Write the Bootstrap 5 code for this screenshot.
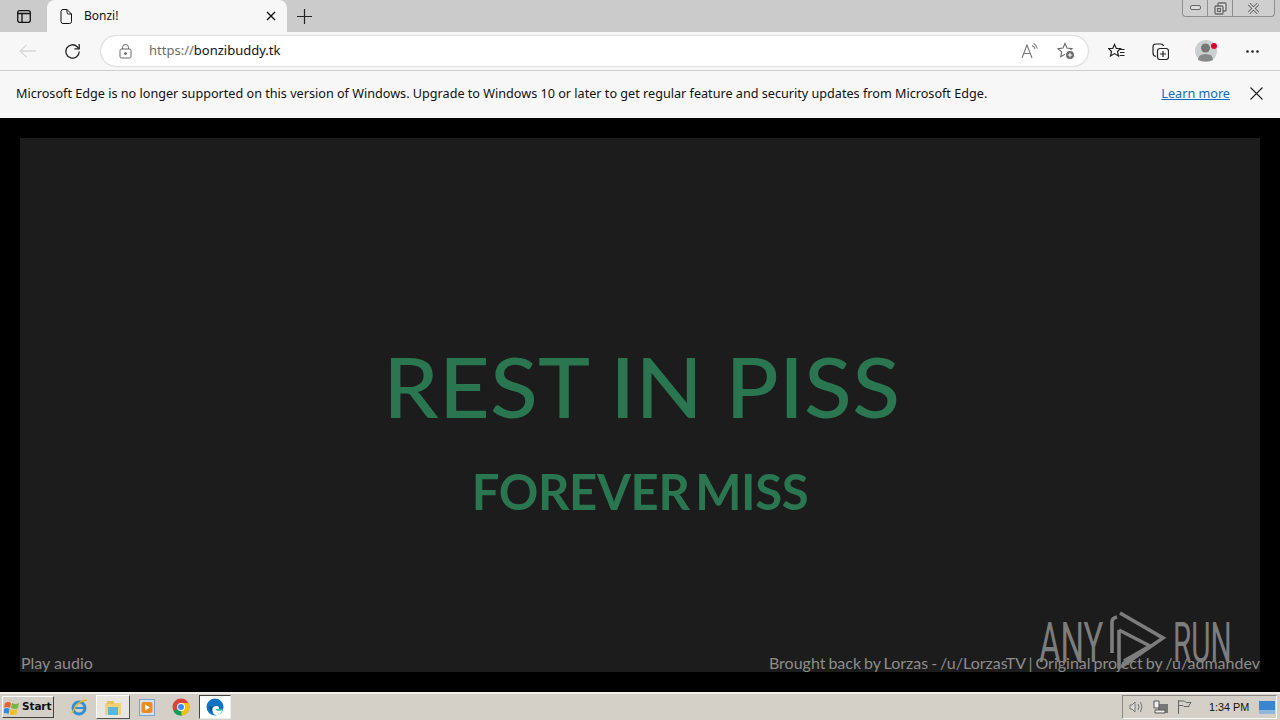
<!DOCTYPE html>
<html lang="en">
<head>
<meta charset="utf-8">
<title>Bonzi!</title>
<link href="https://cdn.jsdelivr.net/npm/bootstrap@5.3.0/dist/css/bootstrap.min.css" rel="stylesheet">
<style>
html,body{margin:0;height:720px;overflow:hidden;background:#000}
body{width:1280px;font-family:"Noto Sans","Open Sans",sans-serif;color:#111;position:relative}
svg{display:block;flex:none}
.tabstrip{height:32px;background:#cbcbcb;padding-left:8px}
.side-btn{width:32px;height:32px}
.browser-tab{width:240px;height:32px;margin-left:7px;background:#f7f7f7;border-radius:8px 8px 0 0;padding:0 11px 0 13px;font-size:12px}
.tab-name{margin-left:12px;margin-right:auto}
.new-tab{width:35px;height:32px}
.win-ctl{height:17px;margin-left:auto;margin-right:5px;border:1px solid #8f8f8f;border-top:0;border-radius:0 0 4px 4px;background:#cfcfcf}
.win-ctl>div{height:100%;border-right:1px solid #8f8f8f;width:25px}
.win-ctl>div:last-child{border-right:0;width:41px}
.toolbar{height:39px;background:#f7f7f7;border-bottom:1px solid #cfcfcf;padding-left:10px}
.tool{width:36px;height:32px}
.tool-prof{margin-left:11px}
.tool-more{margin-left:9px}
.addr{width:987px;height:30px;margin-left:11px;margin-right:10px;background:#fff;border-radius:15px;box-shadow:0 0 2px rgba(0,0,0,.35);padding-left:18px;padding-right:13px;font-size:13px}
.scheme{color:#6b6b6b;margin-left:17px}
.infobar{height:47px;background:#f7f7f7;padding:0 17px 2px 16px;font-size:12.64px}
.infobar a{color:#0f6cbd;margin-left:auto;margin-right:20px}
.page-area{height:574px;background:#000;padding:20px}
.panel{height:534px;background:#1c1c1c;font-family:Lato,sans-serif;position:relative}
.rip{color:#2a7650;font-size:83px;line-height:96px;font-weight:500;margin:0;padding-top:200px;text-align:center;padding-left:4px}
.rip-wide{display:inline-block;transform:scaleX(1.06);letter-spacing:.2px}
.miss{color:#2a7650;font-size:49px;line-height:58px;font-weight:700;margin:0;padding-top:28px;letter-spacing:-.35px;word-spacing:-6px;text-align:center}
.foot-line{position:absolute;left:1px;right:0;bottom:0;color:#8d8d8d;font-size:16px;line-height:19px}
.foot-line a{color:#8d8d8d;text-decoration:none}
.credit{word-spacing:-1.15px}
.mark-logo{position:absolute;left:1039px;top:609px;width:194px;height:62px}
.any,.runw{position:absolute;top:2px;font-family:"Roboto",sans-serif;font-weight:400;font-size:55px;line-height:64px;transform-origin:left top;color:#7d7d7d}
.any{left:0;transform:scaleX(.6)}
.runw{left:134px;transform:scaleX(.54)}
.taskbar{height:28px;background:#d4d0c8;border-top:2px solid #f1efe9;font-family:"Liberation Sans",sans-serif}
.start-btn{width:52px;height:22px;margin:2px 0 0 2px;background:#d4d0c8;border:1px solid;border-color:#fff #404040 #404040 #fff;font-weight:700;font-size:10.5px;font-family:"DejaVu Sans",sans-serif;gap:2px;padding-left:1px;letter-spacing:-.1px}
.t-icon{width:34px;height:24px;margin-top:1px}
.t-first{margin-left:8px}
.t-pressed{background:#e9e6df;border:1px solid;border-color:#fff #555 #555 #fff}
.t-active{background:#fff;border:1px solid;border-color:#444 #eee #eee #444;width:32px;margin-left:1px}
.tray{margin-left:auto;width:155px;height:24px;margin-top:1px;margin-right:3px;border:1px solid;border-color:#8a8a8a #f8f8f8 #f8f8f8 #8a8a8a;font-size:10.8px;padding-left:6px;padding-right:1px;white-space:nowrap}
.clock{margin-left:9px;margin-right:auto}
</style>
</head>
<body>
<div class="tabstrip d-flex align-items-start">
  <div class="side-btn d-flex align-items-center justify-content-center"><svg width="14" height="13" viewBox="0 0 14 13" fill="none" stroke="#111" stroke-width="1.3"><rect x=".7" y=".7" width="12.6" height="11.6" rx="2"/><path d="M.7 3.5h12.6M5 3.5v8.8" /></svg></div>
  <div class="browser-tab d-flex align-items-center">
    <svg width="12" height="15" viewBox="0 0 12 15" fill="none" stroke="#111"><path d="M1 2.500q0-2 2-2h4l4.500 4.500v7.500q0 2-2 2h-6.500q-2 0-2-2zM7 .5v3q0 1.500 1.500 1.500h3"/></svg>
    <span class="tab-name">Bonzi!</span>
    <svg width="10" height="10" viewBox="0 0 10 10" stroke="#111" stroke-width="1.400"><path d="M1 1l8 8M9 1l-8 8"/></svg>
  </div>
  <div class="new-tab d-flex align-items-center justify-content-center"><svg width="15" height="15" viewBox="0 0 15 15" stroke="#222" stroke-width="1.200"><path d="M7.500 0v15M0 7.500h15"/></svg></div>
  <div class="win-ctl d-flex">
    <div class="d-flex align-items-center justify-content-center"><svg width="11" height="6" viewBox="0 0 11 6" fill="#ddd" stroke="#666"><rect x=".5" y=".5" width="10" height="4" rx="1.500"/></svg></div>
    <div class="d-flex align-items-center justify-content-center"><svg width="13" height="13" viewBox="0 0 13 13" fill="#ddd" stroke="#666" stroke-width="1.300"><rect x="4" y="1" width="8" height="8" rx="1"/><rect x="1" y="4" width="8" height="8" rx="1"/><rect x="3.500" y="6.500" width="3" height="3" fill="none"/></svg></div>
    <div class="d-flex align-items-center justify-content-center"><svg width="13" height="11" viewBox="0 0 13 11" stroke="#666" stroke-width="3.200"><path d="M2 1l9 9M11 1l-9 9"/><path d="M2 1l9 9M11 1l-9 9" stroke="#ddd" stroke-width="1.400"/></svg></div>
  </div>
</div>
<div class="toolbar d-flex align-items-center">
  <div class="tool d-flex align-items-center justify-content-center"><svg width="18" height="14" viewBox="0 0 18 14" fill="none" stroke="#d8d8d8" stroke-width="1.300"><path d="M1 7h16M7.500 1l-6.500 6 6.500 6"/></svg></div>
  <div class="tool ms-2 d-flex align-items-center justify-content-center"><svg width="17" height="17" viewBox="0 0 17 17" fill="none" stroke="#222" stroke-width="1.300"><path d="M15.200 8.500a6.700 6.700 0 1 1-2-4.800l2 2"/><path d="M15.200 1v4.800h-4.800" /></svg></div>
  <div class="addr d-flex align-items-center">
    <svg width="13" height="15" viewBox="0 0 13 15" fill="none" stroke="#666"><rect x="1" y="5" width="11" height="9" rx="1.500"/><path d="M3.500 5V3.500a3 3 0 0 1 6 0V5"/><circle cx="6.500" cy="9.500" r="1" fill="#666"/></svg>
    <span class="scheme">https://</span><span>bonzibuddy.tk</span>
    <svg class="ms-auto" width="17" height="16" viewBox="0 0 17 16" fill="none" stroke="#777" stroke-width="1.100"><path d="M1 15L6 2l5 13M2.800 10.500h6.500"/><path d="M11 2.500q2.500 1 3 3.500M12.500.5q3 1.500 3.800 5"/></svg>
    <svg style="margin-left:19px" width="18" height="18" viewBox="0 0 18 18" fill="none" stroke="#666" stroke-width="1.100"><path d="M8 1.500l2 4.600 5 .5-3.700 3.300 1 4.800L8 12.300 3.700 14.700l1-4.800L1 6.600l5-.5z"/><circle cx="13" cy="13" r="4.500" fill="#666" stroke="#f7f7f7"/><path d="M13 10.800v4.400M10.800 13h4.400" stroke="#fff"/></svg>
  </div>
  <div class="tool d-flex align-items-center justify-content-center"><svg width="17" height="16" viewBox="0 0 17 16" fill="none" stroke="#222" stroke-width="1.200"><path d="M6.500 1.500l1.800 4h4.200l-3 3 1 4.500-4-2.400-4 2.400 1-4.500-3-3h4.200z"/><path d="M11.500 6.500h5M12 9.500h4.500M11.500 12.500h5"/></svg></div>
  <div class="tool ms-2 d-flex align-items-center justify-content-center"><svg width="17" height="17" viewBox="0 0 17 17" fill="none" stroke="#222" stroke-width="1.200"><path d="M4 13.500q-3-.5-3-3.500V4q0-3 3-3h5q2 0 2.500 2"/><rect x="5.500" y="5.500" width="11" height="11" rx="2.500"/><path d="M11 8v6M8 11h6"/></svg></div>
  <div class="tool tool-prof d-flex align-items-center justify-content-center"><svg width="26" height="24" viewBox="0 0 26 24"><circle cx="12" cy="12" r="11" fill="#c9d0cf"/><circle cx="11.500" cy="9" r="4.500" fill="#777"/><path d="M4 21q0-6 7.500-6t7.500 6q-7 3-15 0z" fill="#888"/><circle cx="20" cy="7" r="3" fill="#e3002b"/></svg></div>
  <div class="tool tool-more d-flex align-items-center justify-content-center"><svg width="13" height="3" viewBox="0 0 13 3" fill="#222"><circle cx="1.500" cy="1.500" r="1.300"/><circle cx="6.500" cy="1.500" r="1.300"/><circle cx="11.500" cy="1.500" r="1.300"/></svg></div>
</div>
<div class="infobar d-flex align-items-center">
  <span>Microsoft Edge is no longer supported on this version of Windows. Upgrade to Windows 10 or later to get regular feature and security updates from Microsoft Edge.</span>
  <a href="#">Learn more</a>
  <svg width="13" height="13" viewBox="0 0 13 13" stroke="#222" stroke-width="1.100"><path d="M.5.500l12 12M12.500.500l-12 12"/></svg>
</div>
<div class="page-area">
  <div class="panel">
    <h1 class="rip"><span class="rip-wide">REST IN PISS</span></h1>
    <h2 class="miss">FOREVER MISS</h2>
    <div class="foot-line d-flex justify-content-between">
      <a href="#">Play audio</a>
      <span class="credit">Brought back by Lorzas - /u/LorzasTV | Original project by /u/admandev</span>
    </div>
  </div>
</div>
<div class="mark-logo">
  <span class="any">ANY</span>
  <svg width="194" height="62" viewBox="0 0 194 62" fill="none" stroke="#7d7d7d" stroke-width="3.600" style="position:absolute;left:0;top:0"><path d="M73 44V13q0-4 5-5"/><path d="M81 4L124 29 82 58"/><path d="M80 21V60M80 21L111 37 85 52"/></svg>
  <span class="runw">RUN</span>
</div>
<div class="taskbar d-flex align-items-start">
  <div class="start-btn d-flex align-items-center">
    <svg width="16" height="15" viewBox="0 0 16 15"><path d="M1 3q3-2 6 0l-1 5q-3-2-6 0z" fill="#e8632b"/><path d="M8 3q3 2 7 0l-1 5q-3 2-7 0z" fill="#7cb342"/><path d="M0 9q3-2 5.500 0l-1 5q-3-2-6 0z" fill="#2f88d8"/><path d="M6.500 9q3 2 7 0l-1 5q-3 2-7 0z" fill="#f3c11f"/></svg>
    <span>Start</span>
  </div>
  <div class="t-first t-icon d-flex align-items-center justify-content-center"><svg width="18" height="18" viewBox="0 0 18 18" fill="none"><ellipse cx="9" cy="10" rx="6" ry="6" stroke="#2f8fd8" stroke-width="3"/><path d="M4 10h10" stroke="#2f8fd8" stroke-width="2"/><path d="M2 15Q8 2 17 2" stroke="#e6b81e" stroke-width="1.500"/></svg></div>
  <div class="t-icon t-pressed d-flex align-items-center justify-content-center"><svg width="16" height="15" viewBox="0 0 16 15"><rect x="0" y="3" width="16" height="12" rx="1" fill="#f0d27a"/><rect x="3" y="7" width="10" height="8" fill="#5eb6d8"/><rect x="2" y="1" width="7" height="3" fill="#e7c160"/></svg></div>
  <div class="t-icon d-flex align-items-center justify-content-center"><svg width="16" height="17" viewBox="0 0 16 17"><rect x=".5" y=".5" width="15" height="16" fill="#cfe1f3" stroke="#7aa3cf"/><rect x="2.500" y="3" width="11" height="11" rx="2" fill="#ee8a1f"/><path d="M6 5.500v6l5-3z" fill="#fff"/></svg></div>
  <div class="t-icon d-flex align-items-center justify-content-center"><svg width="18" height="18" viewBox="0 0 18 18"><circle cx="9" cy="9" r="8.500" fill="#db4437"/><path d="M9 9L1.500 13a8.500 8.500 0 0 0 8 4.500z" fill="#0f9d58"/><path d="M9 5h7.500a8.500 8.500 0 0 1-7 12.500z" fill="#f4c20d"/><circle cx="9" cy="9" r="4" fill="#fff"/><circle cx="9" cy="9" r="3" fill="#4285f4"/></svg></div>
  <div class="t-icon t-active d-flex align-items-center justify-content-center"><svg width="18" height="18" viewBox="0 0 18 18"><circle cx="9" cy="9" r="8.500" fill="#1273c4"/><path d="M17 10q0 6-6 7-5 0-5-5 0-3 4-3 3 0 3 2h4z" fill="#35c1a8"/><path d="M8 9q-3 1-1.500 5-4-2-3-6" fill="#0c4c8f"/><path d="M6.500 10.500q.5-2.500 4-2.500 2.500 0 2.500 2l-.5 1h-3q.5 2 3.500 2 2 0 3-1-1 5-5.500 5-4 0-4-6z" fill="#fff"/></svg></div>
  <div class="tray d-flex align-items-center gap-2">
    <svg width="16" height="14" viewBox="0 0 16 14" fill="none" stroke="#777"><path d="M1 5h2l3-3v10l-3-3H1z" fill="#ddd"/><path d="M9 4q2 3 0 6M11.500 2q3 5 0 10"/></svg>
    <svg width="16" height="15" viewBox="0 0 16 15"><rect x="5" y="4" width="10" height="9" fill="#777"/><path d="M1 1h5v7H1zM2 10h10v3H2z" fill="#eee" stroke="#555"/></svg>
    <svg width="15" height="14" viewBox="0 0 15 14" fill="none" stroke="#666"><path d="M1.500 0v14M1.500 1h6l1.500 1.500h5l-2 3 0 1-5 0-1-1h-4.500"/></svg>
    <span class="clock">1:34 PM</span>
    <svg width="16" height="13" viewBox="0 0 16 13"><rect width="16" height="11" fill="#3a85d0"/><rect y="9" width="16" height="4" fill="#8db8e0"/></svg>
  </div>
</div>
</body>
</html>
